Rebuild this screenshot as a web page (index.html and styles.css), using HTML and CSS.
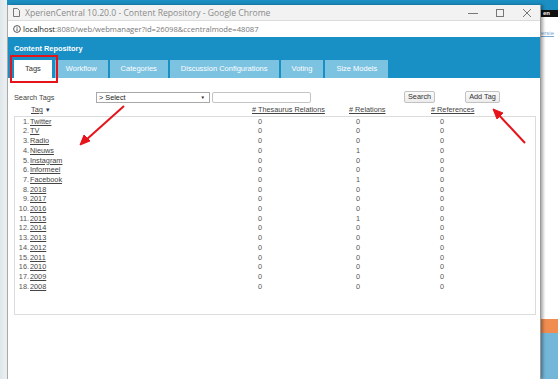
FILE: index.html
```html
<!DOCTYPE html>
<html lang="en">
<head>
    <meta charset="UTF-8">
    <title>XperienCentral 10.20.0 - Content Repository</title>
    <link rel="stylesheet" href="styles.css">
</head>
<body>

<div class="desk">
    <div class="desk-left"></div>

    <div class="window">
        <div class="titlebar">
            <svg class="page-icon" width="7" height="9" viewBox="0 0 7 9">
                <path d="M0.5 0.5 H4.5 L6.5 2.5 V8.5 H0.5 Z" fill="none" stroke="#777" stroke-width="1"/>
            </svg>
            <span class="title-text">XperienCentral 10.20.0 - Content Repository - Google Chrome</span>
            <div class="win-controls">
                <svg width="10" height="10" viewBox="0 0 10 10"><path d="M0 5.5 H10" stroke="#777" stroke-width="1"/></svg>
                <svg width="10" height="10" viewBox="0 0 10 10"><rect x="1.5" y="1.5" width="7" height="7" fill="none" stroke="#777" stroke-width="1"/></svg>
                <svg width="10" height="10" viewBox="0 0 10 10"><path d="M1 1 L9 9 M9 1 L1 9" stroke="#777" stroke-width="1"/></svg>
            </div>
        </div>

        <div class="addressbar">
            <svg class="info-icon" width="8" height="8" viewBox="0 0 8 8">
                <circle cx="4" cy="4" r="3.4" fill="none" stroke="#444" stroke-width="0.9"/>
                <path d="M4 3.4 V6" stroke="#444" stroke-width="0.9"/>
                <circle cx="4" cy="2.2" r="0.5" fill="#444"/>
            </svg>
            <span class="url"><b>localhost</b>:8080/web/webmanager?id=26098&amp;ccentralmode=48087</span>
        </div>

        <div class="app-header">
            <div class="app-title">Content Repository</div>
            <div class="tabs">
                <span class="tab active">Tags</span>
                <span class="tab">Workflow</span>
                <span class="tab">Categories</span>
                <span class="tab">Discussion Configurations</span>
                <span class="tab">Voting</span>
                <span class="tab">Size Models</span>
            </div>
        </div>

        <div class="content">
            <div class="search-row">
                <span class="search-label">Search Tags</span>
                <div class="select">&gt; Select <span class="select-arrow">▼</span></div>
                <div class="text-input"></div>
                <span class="btn btn-search">Search</span>
                <span class="btn btn-add">Add Tag</span>
            </div>

            <div class="grid head">
                <span class="col-tag"><u>Tag</u> <span class="sort">▼</span></span>
                <span><u># Thesaurus Relations</u></span>
                <span><u># Relations</u></span>
                <span><u># References</u></span>
            </div>

            <div class="list-box" id="rows"></div>
        </div>
    </div>

    <div class="desk-right">
        <div class="dr-blue"></div>
        <div class="dr-black">en</div>
        <div class="dr-white"><u>versie</u></div>
        <div class="dr-orange"></div>
        <div class="dr-lightblue"></div>
    </div>
</div>

<div class="mark-box"></div>
<svg class="annot" width="558" height="379" viewBox="0 0 558 379">
    <path d="M124 106 L86 140" stroke="#e5141b" stroke-width="2"/>
    <path d="M80 145 L84 135 L90 141 Z" fill="#e5141b" stroke="#e5141b" stroke-width="1"/>
    <path d="M525 143 L497 113" stroke="#e5141b" stroke-width="2"/>
    <path d="M493 109 L503 113 L497 119 Z" fill="#e5141b" stroke="#e5141b" stroke-width="1"/>
</svg>

<script>
const tags = [
    ['Twitter', 0, 0, 0], ['TV', 0, 0, 0], ['Radio', 0, 0, 0], ['Nieuws', 0, 1, 0],
    ['Instagram', 0, 0, 0], ['Informeel', 0, 0, 0], ['Facebook', 0, 1, 0],
    ['2018', 0, 0, 0], ['2017', 0, 0, 0], ['2016', 0, 0, 0], ['2015', 0, 1, 0],
    ['2014', 0, 0, 0], ['2013', 0, 0, 0], ['2012', 0, 0, 0], ['2011', 0, 0, 0],
    ['2010', 0, 0, 0], ['2009', 0, 0, 0], ['2008', 0, 0, 0]
];

const box = document.getElementById('rows');
tags.forEach(function (t, i) {
    const row = document.createElement('div');
    row.className = 'grid row';
    row.innerHTML =
        '<span class="col-tag"><span class="nr">' + (i + 1) + '.</span><u>' + t[0] + '</u></span>' +
        '<span class="val v1">' + t[1] + '</span>' +
        '<span class="val v2">' + t[2] + '</span>' +
        '<span class="val v3">' + t[3] + '</span>';
    box.appendChild(row);
});
</script>

</body>
</html>
```

FILE: styles.css
```css
html, body {
    margin: 0;
    padding: 0;
}
body {
    width: 558px;
    height: 379px;
    overflow: hidden;
    position: relative;
    font-family: "Liberation Sans", Arial, sans-serif;
    color: #333;
}
.desk {
    display: flex;
    height: 379px;
    background: linear-gradient(#1b8ec2 0 5px, #ffffff 5px);
}
.desk-left {
    width: 7px;
    background: linear-gradient(90deg, #dfe6ea, #edf1f3);
}
.window {
    width: 532px;
    margin-top: 5px;
    background: #fff;
    border-left: 1px solid #a9a9a9;
    border-right: 1px solid #9a9a9a;
    box-shadow: 2px 0 3px rgba(0,0,0,0.35);
    display: flex;
    flex-direction: column;
    z-index: 1;
}
.titlebar {
    height: 15px;
    background: #f2f2f2;
    border-bottom: 1px solid #dcdcdc;
    display: flex;
    align-items: center;
    padding-left: 5px;
    font-family: "Open Sans", "Noto Sans", sans-serif;
    font-size: 8.6px;
    color: #8a8a8a;
}
.page-icon {
    margin-right: 5px;
}
.title-text {
    flex-grow: 1;
}
.win-controls {
    display: flex;
    gap: 17px;
    margin-right: 8px;
}
.addressbar {
    height: 16px;
    display: flex;
    align-items: center;
    padding-left: 5px;
    font-family: "Open Sans", "Noto Sans", sans-serif;
    font-size: 7.65px;
    color: #777;
}
.info-icon {
    margin-right: 2px;
}
.url b {
    color: #222;
    font-weight: normal;
}
.app-header {
    background: #1890c6;
    height: 41px;
    padding-left: 6px;
    display: flex;
    flex-direction: column;
}
.app-title {
    color: #fff;
    font-weight: bold;
    font-size: 7.4px;
    padding-top: 8px;
    line-height: 8px;
}
.tabs {
    display: flex;
    gap: 2px;
    margin-top: auto;
}
.tab {
    height: 18px;
    line-height: 18px;
    padding: 0 11px;
    background: #7cc2e1;
    color: #fff;
    font-size: 7.5px;
}
.tab.active {
    background: #fff;
    color: #333;
    margin-right: 1px;
}
.content {
    padding: 13px 4px 0 6px;
    font-size: 7.3px;
}
.search-row {
    display: flex;
    align-items: center;
    height: 12px;
}
.search-label {
    width: 82px;
    color: #444;
}
.select {
    width: 110px;
    height: 9px;
    line-height: 9px;
    border: 1px solid #a8a8a8;
    padding-left: 2px;
    color: #222;
    position: relative;
}
.select-arrow {
    position: absolute;
    right: 4px;
    font-size: 4.5px;
    color: #222;
}
.text-input {
    width: 97px;
    height: 9px;
    margin-left: 2px;
    border: 1px solid #c4c4c4;
    border-radius: 2px;
}
.btn {
    height: 10px;
    line-height: 10px;
    padding: 0 3px;
    border: 1px solid #c2c2c2;
    border-radius: 2px;
    background: linear-gradient(#fafafa, #ececec);
    color: #333;
}
.btn-search {
    margin-left: 93px;
}
.btn-add {
    margin-left: 30px;
}
.grid {
    display: grid;
    grid-template-columns: 238px 97px 82px 1fr;
    line-height: 9.7px;
}
.head {
    margin-top: 2px;
    color: #444;
}
.head .col-tag {
    padding-left: 17px;
}
.sort {
    color: #1d3c66;
    font-size: 6px;
}
.list-box {
    height: 197px;
    border: 1px solid #dcdcdc;
}
.row .col-tag {
    display: flex;
}
.nr {
    width: 14px;
    text-align: right;
    padding-right: 1px;
    color: #555;
}
.row u {
    color: #444;
}
.val {
    color: #555;
}
.v1 { padding-left: 5px; }
.v2 { padding-left: 6px; }
.v3 { padding-left: 8px; }

.desk-right {
    flex-grow: 1;
    display: flex;
    flex-direction: column;
    background: #fff;
    font-family: "Liberation Sans", Arial, sans-serif;
}
.dr-blue {
    height: 10px;
    background: #1b8ec2;
}
.dr-black {
    height: 7px;
    background: #111;
    color: #fff;
    font-weight: bold;
    font-size: 6px;
    line-height: 7px;
    padding-left: 2px;
}
.dr-white {
    height: 302px;
    font-size: 6px;
    color: #7aa7d6;
    padding-top: 13px;
    box-sizing: border-box;
    white-space: nowrap;
    margin-left: -3px;
}
.dr-orange {
    height: 14px;
    background: #f08c50;
}
.dr-lightblue {
    flex-grow: 1;
    background: #74b6d8;
}

.mark-box {
    position: absolute;
    left: 10px;
    top: 55px;
    width: 44px;
    height: 24px;
    border: 2px solid #e5141b;
    z-index: 3;
}
.annot {
    position: absolute;
    left: 0;
    top: 0;
    z-index: 4;
    pointer-events: none;
}
```
